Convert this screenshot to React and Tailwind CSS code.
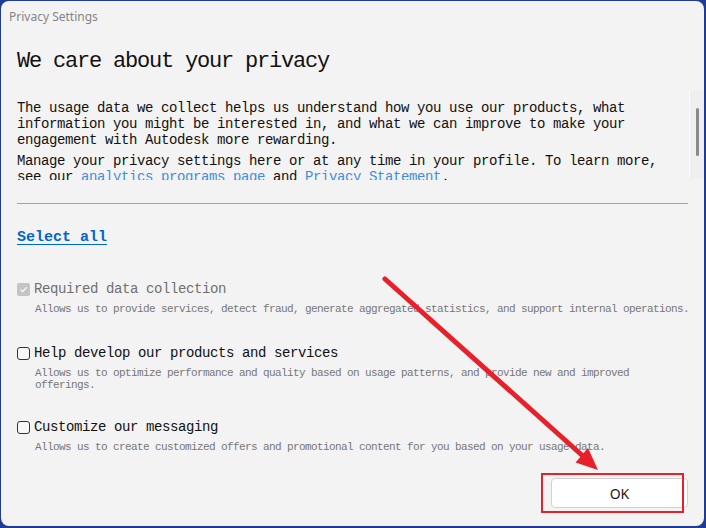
import React from "react";

const mono = { fontFamily: '"Liberation Mono", "DejaVu Sans Mono", monospace' };

function Box({ disabled }) {
  if (disabled) {
    return (
      <span className="w-[13px] h-[13px] rounded-[2px] bg-[#c4c4c4] flex items-center justify-center shrink-0">
        <svg width="9" height="9" viewBox="0 0 9 9">
          <path d="M1.5 4.6 L3.6 6.6 L7.6 2.4" fill="none" stroke="#ffffff" strokeWidth="1.2" />
        </svg>
      </span>
    );
  }
  return <span className="w-[13px] h-[13px] rounded-[3px] border border-[#333333] bg-[#f7f7f7] shrink-0" />;
}

function Option({ label, desc, disabled, mt }) {
  return (
    <div className={mt}>
      <div className="flex items-center gap-[4px] h-[16px]">
        <Box disabled={disabled} />
        <span
          className={`text-[14px] leading-[16px] tracking-[-0.4px] ${disabled ? "text-[#707070]" : "text-[#111111]"}`}
          style={mono}
        >
          {label}
        </span>
      </div>
      <div
        className="pl-[18px] mt-[6px] text-[11px] leading-[12px] tracking-[-0.6px] text-[#777777]"
        style={mono}
      >
        {desc}
      </div>
    </div>
  );
}

export default function App() {
  return (
    <div className="w-[706px] h-[528px] bg-[#1f3b93] pt-[1px] pl-[1px] pr-[2px] pb-[2px] overflow-hidden">
      <div className="relative w-full h-full rounded-[8px] bg-[#f3f3f3] flex flex-col overflow-hidden">
        <div
          className="h-[32px] shrink-0 px-[8px] flex items-center text-[12px] text-[#858585]"
          style={{ fontFamily: '"Noto Sans", "Open Sans", sans-serif' }}
        >
          Privacy Settings
        </div>

        <div className="pl-[16px] flex flex-col">
          <h1
            className="mt-[17px] text-[22px] leading-[24px] tracking-[-1.2px] text-[#111111] font-normal"
            style={mono}
          >
            We care about your privacy
          </h1>

          <div className="mt-[16px] h-[90px] flex">
            <div
              className="flex-1 overflow-hidden pt-[10px] text-[14px] leading-[16px] tracking-[-0.4px] text-[#111111]"
              style={mono}
            >
              <p>
                The usage data we collect helps us understand how you use our products, what
                <br />
                information you might be interested in, and what we can improve to make your
                <br />
                engagement with Autodesk more rewarding.
              </p>
              <p className="mt-[5px]">
                Manage your privacy settings here or at any time in your profile. To learn more,
                <br />
                see our <span className="text-[#3f8ddf]">analytics programs page</span> and{" "}
                <span className="text-[#3f8ddf]">Privacy Statement</span>.
              </p>
            </div>
            <div className="w-[15px] h-[88px] mt-[1px] bg-[#efefef] border-l border-[#fafafa] flex justify-center">
              <div className="w-[3px] h-[48px] mt-[17px] rounded-full bg-[#8a8a8a]" />
            </div>
          </div>

          <div className="mr-[16px] mt-[23px] h-[1px] bg-[#a3a3a3]" />

          <div className="mt-[24px] h-[20px] flex items-center">
            <span
              className="text-[15px] leading-[20px] font-bold text-[#0066cc] underline underline-offset-[3px]"
              style={mono}
            >
              Select all
            </span>
          </div>

          <Option
            mt="mt-[33px]"
            disabled
            label="Required data collection"
            desc="Allows us to provide services, detect fraud, generate aggregated statistics, and support internal operations."
          />
          <Option
            mt="mt-[30px]"
            label="Help develop our products and services"
            desc={
              <>
                Allows us to optimize performance and quality based on usage patterns, and provide new and improved
                <br />
                offerings.
              </>
            }
          />
          <Option
            mt="mt-[28px]"
            label="Customize our messaging"
            desc="Allows us to create customized offers and promotional content for you based on your usage data."
          />

          <div className="mt-[25px] pr-[16px] flex justify-end">
            <button
              className="w-[137px] h-[30px] rounded-[4px] bg-white border border-[#d2d2d2] text-[14px] text-[#1a1a1a]"
              style={{ fontFamily: '"Noto Sans", "Open Sans", sans-serif' }}
            >
              OK
            </button>
          </div>
        </div>

        <div className="absolute left-[540px] top-[472px] w-[143px] h-[40px] border-2 border-[#e8202a]" />
        <svg className="absolute left-0 top-0 pointer-events-none" width="706" height="528" viewBox="0 0 706 528">
          <g transform="translate(-1,-1)">
            <line x1="385" y1="279" x2="584" y2="457" stroke="#e8202a" strokeWidth="5" strokeLinecap="round" />
            <polygon points="598,470 575.5,462.5 588,448" fill="#e8202a" />
          </g>
        </svg>
      </div>
    </div>
  );
}
